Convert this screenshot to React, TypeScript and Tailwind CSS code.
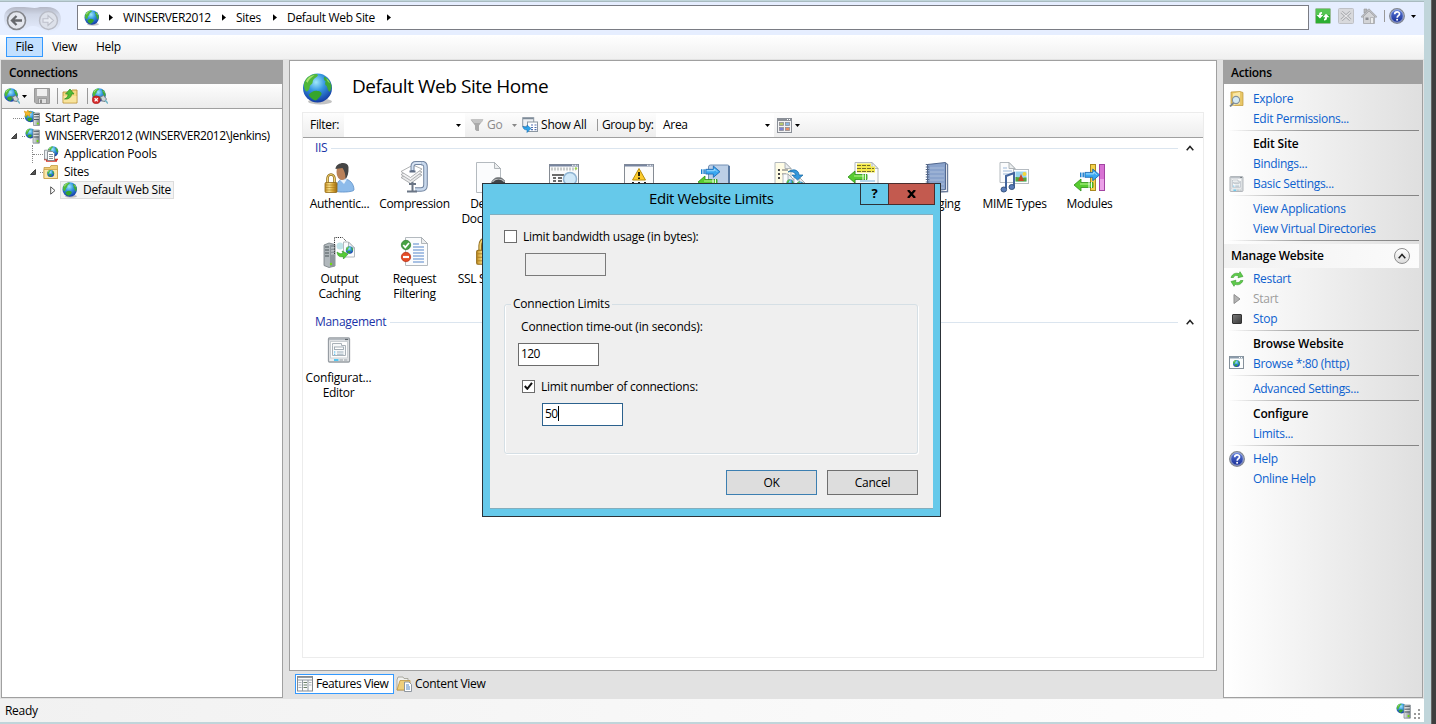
import React, { useId } from "react";

type IconProps = { className?: string };

/* ---------- shared drawing parts ---------- */

function GlobeShape({ cx, cy, r }: { cx: number; cy: number; r: number }) {
  const id = useId();
  return (
    <g>
      <defs>
        <radialGradient id={id} cx="0.45" cy="0.3" r="0.75">
          <stop offset="0" stopColor="#9fe8fa" />
          <stop offset="0.4" stopColor="#3797e2" />
          <stop offset="1" stopColor="#0f2f9c" />
        </radialGradient>
      </defs>
      <circle cx={cx} cy={cy} r={r} fill={`url(#${id})`} />
      <g transform={`translate(${cx - r} ${cy - r}) scale(${r / 15})`}>
        <path d="M1 11C2 5 7 1 13 .5c3 0 3 2 1 3-2 1-4 3-4 5 0 3-3 3-3 5 0 3-2 5-3 5-2 0-3-4-3-7.500z" fill="#4fb83a" />
        <path d="M3 8c2-4 5-6 9-6.500-2 2-6 4-7 8z" fill="#a8e070" />
        <path d="M22 3c4 2 7 6 7.500 10 0 3-1 5-2 6-2-1-2-4-3-6-2-1-2-3-1-5-2-1-2.500-3-1.500-5z" fill="#3fa83a" />
        <path d="M24 5c2 1 3 3 4 5-2-.5-3-2-4-5z" fill="#8fd860" />
        <path d="M6 22c2-3 6-5 9-4 3 0 5 2 4 4-2 3-4 5-6 6-3-1-6-3-7-6z" fill="#36a52c" />
      </g>
    </g>
  );
}

function ServerShape({ x, y, s = 1 }: { x: number; y: number; s?: number }) {
  const id = useId();
  return (
    <g transform={`translate(${x} ${y}) scale(${s})`}>
      <defs>
        <linearGradient id={id}>
          <stop offset="0" stopColor="#e4e8ea" />
          <stop offset="1" stopColor="#7d868c" />
        </linearGradient>
      </defs>
      <path d="M.5 1.500h6v12.500h-6z" fill={`url(#${id})`} stroke="#79838a" strokeWidth=".7" />
      <path d="M1 3h5M1 5.500h5M1 8h5" stroke="#4f5a61" strokeWidth="1" />
      <path d="M1 4h5M1 6.500h5" stroke="#fff" strokeWidth=".6" />
      <circle cx="4.800" cy="12" r="1" fill="#6fe000" />
    </g>
  );
}

function PadlockShape({ x, y, s = 1 }: { x: number; y: number; s?: number }) {
  const id = useId();
  return (
    <g transform={`translate(${x} ${y}) scale(${s})`}>
      <defs>
        <linearGradient id={id}>
          <stop offset="0" stopColor="#c79022" />
          <stop offset=".35" stopColor="#f8e08a" />
          <stop offset=".6" stopColor="#e0b040" />
          <stop offset="1" stopColor="#9b6a10" />
        </linearGradient>
      </defs>
      <path d="M3 10V6a3.500 4.500 0 0 1 7 0v4" fill="none" stroke="#8e6a1a" strokeWidth="2.600" />
      <path d="M3 10V6a3.500 4.500 0 0 1 7 0v4" fill="none" stroke="#f0d070" strokeWidth="1.200" />
      <rect x=".5" y="9.500" width="12" height="10" rx="1" fill={`url(#${id})`} stroke="#936b18" strokeWidth=".8" />
      <path d="M1 12h11M1 14.500h11M1 17h11" stroke="#a97a1c" strokeWidth=".6" />
    </g>
  );
}

function Page({ x, y, w, h, fill = "#fbfcfd" }: { x: number; y: number; w: number; h: number; fill?: string }) {
  return (
    <g>
      <path d={`M${x} ${y}h${w - 6}l6 6v${h - 6}h${-w}z`} fill={fill} stroke="#b4babf" strokeWidth="1" />
      <path d={`M${x + w - 6} ${y}v6h6z`} fill="#eceeef" stroke="#9fa6ab" strokeWidth=".8" />
    </g>
  );
}

const GREEN_LEFT = "M0 6l7-6v3.500h12v5H7V12z";
const BLUE_RIGHT = "M20 6l-7-6v3.500H5v5h8V12z";

function BlueArrow({ x, y, s = 1 }: { x: number; y: number; s?: number }) {
  return (
    <g transform={`translate(${x} ${y}) scale(${s})`}>
      <path d="M0 3.500h1.500v5H0zM2.500 3.500H4v5H2.500z" fill="#1b7fd0" />
      <path d={BLUE_RIGHT} fill="#39a7f0" stroke="#125fae" strokeWidth=".8" />
      <path d="M6 5h8V3l3 3" fill="none" stroke="#a8e0ff" strokeWidth="1" />
    </g>
  );
}

function GreenArrow({ x, y, s = 1 }: { x: number; y: number; s?: number }) {
  return (
    <g transform={`translate(${x} ${y}) scale(${s})`}>
      <path d={GREEN_LEFT} fill="#58cc30" stroke="#2c8f18" strokeWidth=".8" />
      <path d="M6 5h10" stroke="#b6f490" strokeWidth="1" />
      <path d="M15 3v6M17.500 3v6" stroke="#fff" strokeWidth=".9" />
    </g>
  );
}

/* ---------- small icons ---------- */

function Globe({ className = "size-4" }: IconProps) {
  return (
    <svg viewBox="0 0 32 32" className={`shrink-0 ${className}`}>
      <ellipse cx="18" cy="28.500" rx="12" ry="3" fill="#777" opacity=".45" />
      <GlobeShape cx={15.500} cy={15} r={14.500} />
    </svg>
  );
}

function NavButtons() {
  const id = useId();
  return (
    <svg viewBox="0 0 58 28" className="h-7 w-[58px] shrink-0">
      <defs>
        <linearGradient id={id} x2="0" y2="1">
          <stop offset="0" stopColor="#b4b8c6" />
          <stop offset=".3" stopColor="#cfd6e6" />
          <stop offset="1" stopColor="#e6eeff" />
        </linearGradient>
      </defs>
      <path d="M0 13C0 6 5 2 12 2h8c6 0 10 2 16 0h7c9 0 14 5 14 12s-5 13-11 13c-8 0-9-6-17-6s-7 6-15 6S0 21 0 13z" fill={`url(#${id})`} />
      <circle cx="12.500" cy="15.500" r="9" fill="#e4e7ee" stroke="#85878c" strokeWidth="1.600" />
      <path d="M18 15.500H8.500M12.500 11L8 15.500l4.500 4.500" fill="none" stroke="#66686c" strokeWidth="2.300" />
      <circle cx="44.500" cy="15.500" r="9" fill="#dde1ea" stroke="#b9bcc6" strokeWidth="1.400" />
      <path d="M39 13.800h5v-3.300l5.500 5-5.500 5v-3.300h-5z" fill="#e9ecf3" stroke="#bdc0ca" strokeWidth="1.100" />
    </svg>
  );
}

function Triangle({ className = "" }: IconProps) {
  return (
    <svg viewBox="0 0 5 8" className={`h-[7px] w-[4px] shrink-0 ${className}`}>
      <path d="M0 0l5 4-5 4z" fill="#000" />
    </svg>
  );
}

function Caret({ className = "text-black" }: IconProps) {
  return (
    <svg viewBox="0 0 5 3" className={`h-[3px] w-[5px] shrink-0 ${className}`}>
      <path d="M0 0h5L2.500 3z" fill="currentColor" />
    </svg>
  );
}

function RefreshIcon() {
  return (
    <svg viewBox="0 0 16 16" className="size-4 shrink-0">
      <rect x=".5" y=".5" width="15" height="15" rx="1" fill="#2cae32" stroke="#9bbf9b" />
      <rect x="1" y="1" width="14" height="6" fill="#65cf60" opacity=".7" />
      <path d="M7 4C4.500 4 4 5 4 7H1.500L5 10.500 8.300 7H6c0-1 .2-1.300 1-1.300zM9 12.500c2.500 0 3-1 3-3.300h2.500L11 5.800 7.800 9.200H10c0 1-.2 1.500-1 1.500z" fill="#fff" />
    </svg>
  );
}

function StopPageIcon() {
  return (
    <svg viewBox="0 0 16 16" className="size-4 shrink-0">
      <rect x=".5" y=".5" width="15" height="15" rx="1" fill="#d8d9dc" stroke="#bfc1c6" />
      <path d="M3.500 4l9 8M12.500 4l-9 8" stroke="#a3a5a9" strokeWidth="3" />
      <path d="M3.500 4l9 8M12.500 4l-9 8" stroke="#e6e6e8" strokeWidth="1.200" />
    </svg>
  );
}

function HomeIcon() {
  return (
    <svg viewBox="0 0 16 16" className="size-4 shrink-0">
      <path d="M3 1h3v4H3z" fill="#b5b7ba" stroke="#999" strokeWidth=".6" />
      <path d="M2.500 8v7.500h11V8L8 2.500z" fill="#d3d4d7" stroke="#a4a6aa" strokeWidth=".8" />
      <path d="M0 8.800L8 .8l8 8-1.200.7L8 3 1.200 9.500z" fill="#bfc0c4" stroke="#97999d" strokeWidth=".6" />
      <path d="M4.500 9.500h3V12h-3z" fill="#8d8f94" />
      <path d="M9.500 9.500h3v6h-3z" fill="#eceded" stroke="#9a9ca0" strokeWidth=".6" />
    </svg>
  );
}

function HelpIcon() {
  const id = useId();
  return (
    <svg viewBox="0 0 16 16" className="size-4 shrink-0">
      <defs>
        <linearGradient id={id} x2="0" y2="1">
          <stop offset="0" stopColor="#5e7fe0" />
          <stop offset="1" stopColor="#12278f" />
        </linearGradient>
      </defs>
      <circle cx="8" cy="8" r="7.300" fill={`url(#${id})`} stroke="#84888f" strokeWidth="1.300" />
      <circle cx="8" cy="8" r="6.300" fill="none" stroke="#c7cfe4" strokeWidth=".7" />
      <path d="M5.700 6.200c0-3.200 4.800-3.100 4.800-.3 0 1.700-2.300 1.800-2.300 3.800" fill="none" stroke="#fff" strokeWidth="1.700" />
      <circle cx="8.100" cy="11.800" r="1" fill="#fff" />
    </svg>
  );
}

function ConnectIcon({ off = false }: { off?: boolean }) {
  return (
    <svg viewBox="0 0 16 16" className="size-4 shrink-0">
      <GlobeShape cx={7} cy={7} r={6.800} />
      <path d="M7 8.500l3 2" stroke="#6c747a" strokeWidth="1.300" />
      <path d="M8.500 9l3-1.500 3 3.500-1.500 2.500-3-.5z" fill="#cfd4d8" stroke="#737b81" strokeWidth=".9" />
      <path d="M13 12l3 3.500" stroke="#6fb4c4" strokeWidth="1.500" />
      {off && (
        <g>
          <circle cx="4.200" cy="11.800" r="4" fill="#d42a2a" stroke="#a01414" strokeWidth=".5" />
          <path d="M2.600 10.200l3.200 3.200M5.800 10.200l-3.200 3.200" stroke="#fff" strokeWidth="1.300" />
        </g>
      )}
    </svg>
  );
}

function SaveIcon() {
  return (
    <svg viewBox="0 0 16 16" className="size-4 shrink-0">
      <path d="M.5.500h15v15H2l-1.500-1.500z" fill="#adadad" stroke="#999" />
      <path d="M3 1h10v7H3z" fill="#eeeeee" />
      <path d="M4.500 10.500h8v5h-8z" fill="#dedede" stroke="#8a8a8a" strokeWidth=".7" />
      <path d="M6 11.500h2v3.500H6z" fill="#8b8b8b" />
    </svg>
  );
}

function FolderUpIcon() {
  return (
    <svg viewBox="0 0 16 16" className="size-4 shrink-0">
      <path d="M1 4h8l1-2h5v13H1z" fill="#f4d982" stroke="#b99033" strokeWidth=".9" />
      <path d="M1.500 8h13v6.500h-13z" fill="#f9e6a4" opacity=".8" />
      <path d="M2.500 11c3-1 3.500-3 3.500-5H3.500L8 1l4 5h-2.500c0 3-2.500 5.500-7 5z" fill="#4fbc36" stroke="#2f8c22" strokeWidth=".7" />
    </svg>
  );
}

function StartPageIcon() {
  return (
    <svg viewBox="0 0 16 16" className="size-4 shrink-0">
      <GlobeShape cx={6.500} cy={6.500} r={5.800} />
      <path d="M0 1l2.500 1L4 0l.8 2.200L8 2 5.500 4 6 6.500 3.500 5 1 6.500 1.500 4z" fill="#f6b92c" stroke="#d98e10" strokeWidth=".5" />
      <ServerShape x={9} y={1.500} />
    </svg>
  );
}

function ServerIcon() {
  return (
    <svg viewBox="0 0 16 16" className="size-4 shrink-0">
      <GlobeShape cx={5.500} cy={5.500} r={5} />
      <ServerShape x={7.500} y={0.500} s={1.050} />
    </svg>
  );
}

function PoolsIcon() {
  return (
    <svg viewBox="0 0 16 16" className="size-4 shrink-0">
      <GlobeShape cx={10} cy={5.500} r={5.300} />
      <path d="M1 13.500h14M3 15h11" stroke="#d3392c" strokeWidth="1.500" />
      <path d="M2 5h5l2 2v7H2z" fill="#e8ecef" stroke="#727b82" strokeWidth=".7" transform="translate(-.5 -.8)" />
      <path d="M4.500 5.500h5l2 2v7h-7z" fill="#fff" stroke="#727b82" strokeWidth=".8" />
      <path d="M6 8.500h4M6 10.500h4M6 12.500h4" stroke="#66737e" strokeWidth=".8" />
    </svg>
  );
}

function SitesIcon() {
  return (
    <svg viewBox="0 0 16 16" className="size-4 shrink-0">
      <path d="M1 3.500h6l1-2h6.500V14.500H1z" fill="#efcd78" stroke="#c49a40" strokeWidth=".8" />
      <path d="M1 5.500h13.500v9H1z" fill="#fae7a9" stroke="#c49a40" strokeWidth=".7" />
      <GlobeShape cx={7.700} cy={9.500} r={3.500} />
    </svg>
  );
}

function FunnelIcon() {
  return (
    <svg viewBox="0 0 14 14" className="size-3.5 shrink-0">
      <path d="M.5 1.500h13L9 7.500V13H6.500L5 11.500v-4z" fill="#a9a9a9" />
      <path d="M1 1h12v2L10 5H4z" fill="#c4c4c4" />
    </svg>
  );
}

function ShowAllIcon() {
  return (
    <svg viewBox="0 0 16 16" className="size-4 shrink-0">
      <rect x=".7" y=".7" width="11" height="9" fill="#eef1f4" stroke="#8d98a3" />
      <path d="M1 1.500h10.500" stroke="#7d8b98" strokeWidth="1.500" />
      <rect x="5.500" y="5" width="10" height="9.500" fill="#fff" stroke="#8c97a2" />
      <path d="M9 8h2M12.500 8h2M9 10.500h2M12.500 10.500h2M9 12.700h2M12.500 12.700h2" stroke="#506eae" strokeWidth="1.200" />
      <path d="M1 9c0 3 1.500 4 4 3.700V15.500l4-4-4-3.500v2C3 10.300 2 10 1 9z" fill="#2ea4ea" stroke="#1470b8" strokeWidth=".6" />
    </svg>
  );
}

function GroupIcon() {
  return (
    <svg viewBox="0 0 15 15" className="size-[15px] shrink-0">
      <rect x=".5" y=".5" width="14" height="14" fill="#f3f3f4" stroke="#8a8f97" />
      <path d="M1 2h13" stroke="#8a8f97" strokeWidth="2" />
      <path d="M10 1.500h1M12 1.500h1" stroke="#fff" />
      <g stroke="#8e8e96" strokeWidth=".8">
        <rect x="2.500" y="4.500" width="4" height="3" fill="#b5c66c" />
        <rect x="8.500" y="4.500" width="4" height="3" fill="#88b6e4" />
        <rect x="2.500" y="9.500" width="4" height="3" fill="#7c82d6" />
        <rect x="8.500" y="9.500" width="4" height="3" fill="#ea8c62" />
      </g>
    </svg>
  );
}

function Chevron() {
  return (
    <svg viewBox="0 0 8 6" className="h-[6px] w-2 shrink-0">
      <path d="M.7 5.200L4 1.500l3.300 3.700" fill="none" stroke="#222" strokeWidth="1.500" />
    </svg>
  );
}

function ExploreIcon() {
  return (
    <svg viewBox="0 0 16 16" className="size-4 shrink-0">
      <path d="M2 1l9-.5 3 1v13H4L2 13z" fill="#e9c767" stroke="#bd9636" strokeWidth=".7" />
      <path d="M4 2.500l7-1.500v12l-7 1.500z" fill="#f9e7a6" />
      <circle cx="7" cy="9" r="3.600" fill="#d5ebf5" stroke="#85919b" strokeWidth="1.100" />
      <path d="M4.500 12L1 15.500" stroke="#7a858e" strokeWidth="1.800" />
    </svg>
  );
}

function FormIcon({ className = "size-4" }: IconProps) {
  return (
    <svg viewBox="0 0 24 26" className={`shrink-0 ${className}`}>
      <rect x="1.500" y="1" width="21" height="24" rx="1" fill="#eceeef" stroke="#979da3" strokeWidth="1.300" />
      <path d="M2 2.500h20" stroke="#b4bac0" strokeWidth="1.500" />
      <path d="M18 2.500h3" stroke="#60676d" strokeWidth="1.200" />
      <rect x="3.500" y="4.500" width="17" height="16.500" fill="#fdfdfd" stroke="#c9ced2" />
      <path d="M5.500 8.500v-2h9v2h4v10h-13z" fill="#f6f8f9" stroke="#a9b1b8" />
      <rect x="7.500" y="10" width="9" height="2.500" fill="#fff" stroke="#9ba6af" strokeWidth=".9" />
      <path d="M10 15h6.500M10 17.200h6.500" stroke="#9fb0bd" strokeWidth="1" />
      <path d="M7 14.500h1.300v1H7zM7 16.700h1.300v1H7z" fill="#3eb6f0" />
      <path d="M7 23h4.500" stroke="#22b8f2" strokeWidth="1.500" />
      <path d="M12.500 23h3.500M17 23h3.500" stroke="#b0b7bc" strokeWidth="1.300" />
    </svg>
  );
}

function RestartIcon() {
  return (
    <svg viewBox="0 0 14 16" className="h-4 w-3.5 shrink-0">
      <path d="M1 6.500C2.500 2.500 6 1.500 9 2.700l1-2L13 5.500l-5 1.300.7-1.700C6 4 4 4.500 3.500 6.500z" fill="#5ecb4a" stroke="#359a2c" strokeWidth=".6" />
      <path d="M13 9.500c-1.500 4-5 5-8 3.800l-1 2L1 10.500l5-1.300-.7 1.700c2.700 1.100 4.700.6 5.200-1.400z" fill="#5ecb4a" stroke="#359a2c" strokeWidth=".6" />
    </svg>
  );
}

function StartIcon() {
  return (
    <svg viewBox="0 0 8 10" className="h-2.5 w-2 shrink-0">
      <path d="M1 .5l6 4.500-6 4.500z" fill="#b3b3b3" stroke="#8f8f8f" />
    </svg>
  );
}

function BrowseIcon() {
  return (
    <svg viewBox="0 0 15 13" className="mb-[3px] h-[13px] w-[15px] shrink-0">
      <rect x=".5" y=".5" width="14" height="12" fill="#fcfdfd" stroke="#86919b" />
      <path d="M1 1.500h13" stroke="#8c9cac" strokeWidth="2" />
      <path d="M10 1.500h1M12 1.500h1" stroke="#fff" />
      <GlobeShape cx={7.500} cy={7.500} r={3.500} />
    </svg>
  );
}

function FeaturesIcon() {
  return (
    <svg viewBox="0 0 16 16" className="size-4 shrink-0">
      <rect x=".5" y=".5" width="15" height="14.500" fill="#fafafa" stroke="#848a90" />
      <path d="M1 1.500h14M1 4h14M5.500 4v11M11 4v11" stroke="#929aa1" strokeWidth="1" />
      <path d="M1.500 6.500h3M1.500 9h3M1.500 11.500h3M12 6.500h2.500M12 9h2.500" stroke="#adb3b8" />
      <path d="M6.500 6.500h3.500M6.500 9h3.500M6.500 11.500h3.500" stroke="#6b8069" strokeWidth="1.100" />
    </svg>
  );
}

function ContentIcon() {
  return (
    <svg viewBox="0 0 16 16" className="size-4 shrink-0">
      <path d="M1 4l1-3h5l1 1.500h4V14H1z" fill="#f1f1ee" stroke="#9b9a8f" strokeWidth=".8" />
      <path d="M1 14L4 4.500h10V14z" fill="#efcf7b" stroke="#bf9640" strokeWidth=".8" />
      <path d="M8.500 6h4.500l2.500 2.500v7h-7z" fill="#fff" stroke="#848d97" strokeWidth=".9" />
      <path d="M10 9h3M10 11h4M10 13h4" stroke="#5588c4" />
    </svg>
  );
}

/* ---------- 32px feature icons ---------- */

function Big({ children }: { children: React.ReactNode }) {
  return (
    <svg viewBox="0 0 32 32" className="mr-[2px] size-8 shrink-0">
      {children}
    </svg>
  );
}

function WindowShape() {
  return (
    <g>
      <rect x="1.500" y="3.500" width="29" height="28" fill="#fbfbfb" stroke="#858b93" />
      <path d="M1.500 4.500h29" stroke="#7785a0" strokeWidth="2" />
      <path d="M24 4.300h1.500M26.500 4.300H28M28.700 4.300h1" stroke="#fff" strokeWidth="1" />
    </g>
  );
}

function AuthIcon() {
  return (
    <Big>
      <path d="M13 30c0-8 3-12 8-12 6 0 10 5 10 11 0 2-16 3-18 1z" fill="#8dbbea" stroke="#5d8fc6" strokeWidth=".8" />
      <path d="M17 19l4 4 3-5" fill="#e8f2fb" />
      <ellipse cx="19" cy="11" rx="5.500" ry="8" fill="#b98059" />
      <path d="M12.500 8C13 1 25 0 25.500 6c.3 6-1 10-3 12 0-5-1-8-3-11z" fill="#454545" />
      <PadlockShape x={1.500} y={12} />
    </Big>
  );
}

function CompressionIcon() {
  return (
    <Big>
      <path d="M23 2c3 0 4.500 1 4.500 4v18c0 3-1.500 4.500-4.500 4.500h-6" fill="none" stroke="#7184a0" strokeWidth="4.600" />
      <path d="M23 2c3 0 4.500 1 4.500 4v18c0 3-1.500 4.500-4.500 4.500h-6" fill="none" stroke="#c8d8ec" strokeWidth="2.600" />
      <path d="M3 16.500l9.500 6L24 14l-9-4z" fill="#e9eaeb" stroke="#9a9da0" strokeWidth=".8" />
      <path d="M3 13.500l9.500 6L24 11l-9-4z" fill="#f3f3f4" stroke="#9a9da0" strokeWidth=".8" />
      <path d="M3 10.500l9.500 6L24 8l-9-4z" fill="#fff" stroke="#9a9da0" strokeWidth=".8" />
      <path d="M14.500 10V5.500C14.500 3 16 2 18 2h5.500" fill="none" stroke="#7184a0" strokeWidth="4" />
      <path d="M14.500 9V5.500C14.500 3 16 2 18 2h5.500" fill="none" stroke="#d6e2f2" strokeWidth="2" />
      <path d="M11.500 10.500h6" stroke="#5f6d84" strokeWidth="2" />
      <path d="M14.500 21v9M9 30.500h10M11 23h7" stroke="#6b7686" strokeWidth="2" />
    </Big>
  );
}

function DefaultDocIcon() {
  return (
    <Big>
      <Page x={3.500} y={1.500} w={24} h={30} />
      <circle cx="25.500" cy="24" r="7.500" fill="#404448" stroke="#8b8f92" />
      <path d="M19.500 21c3-4 9-4 12 0" stroke="#b6b9bb" strokeWidth="1.200" fill="none" />
    </Big>
  );
}

function BrowsingIcon() {
  return (
    <Big>
      <WindowShape />
      <path d="M3 8h25" stroke="#c8cbca" strokeWidth="3" strokeDasharray="2 1" />
      <circle cx="28" cy="7.500" r="1.200" fill="#9bd24a" />
      <path d="M4 14h12M5 17h3M10 17h4M5 20h3M10 20h4M5 23h9" stroke="#3d3d3d" strokeWidth="1.400" />
      <circle cx="22" cy="18" r="6.500" fill="#cfe8f8" stroke="#8fb4d2" strokeWidth="1.500" />
    </Big>
  );
}

function ErrorPagesIcon() {
  return (
    <Big>
      <WindowShape />
      <path d="M16 7.500l6.500 11.500h-13z" fill="#fccb2c" stroke="#b88c0c" strokeWidth="1" strokeLinejoin="round" />
      <path d="M16 11v4M16 16.500V18" stroke="#2a2408" strokeWidth="2" />
      <path d="M10 21v6M22 21v6M16 21v6" stroke="#222" strokeWidth="2" />
    </Big>
  );
}

function CgiIcon() {
  return (
    <Big>
      <rect x="10.500" y="4" width="21" height="26" rx="2" fill="#bccfe6" stroke="#7390b4" />
      <path d="M31 5v25" stroke="#5a7aa2" strokeWidth="2" />
      <BlueArrow x={3} y={5} s={0.950} />
      <GreenArrow x={0} y={15} />
    </Big>
  );
}

function HandlerIcon() {
  return (
    <Big>
      <Page x={2} y={1.500} w={16} h={28} fill="#fffce4" />
      <path d="M5 9h2M5 13h2M5 17h2" stroke="#444" strokeWidth="2" />
      <path d="M9 9h6M9 13h4" stroke="#666" />
      <Page x={10} y={13} w={11} h={18} />
      <Page x={21} y={16} w={11} h={15} />
      <path d="M15 11c5-4 11-2 11 3h4l-5.500 5-5.500-5h4c-1-3-5-4-8-3z" fill="#3498dc" stroke="#17659f" strokeWidth=".7" />
      <GlobeShape cx={17} cy={22} r={3.500} />
      <GlobeShape cx={27} cy={24} r={3.500} />
    </Big>
  );
}

function HeadersIcon() {
  return (
    <Big>
      <Page x={7} y={1.500} w={23} h={29} />
      <path d="M9 4h14M9 7h18M9 10h18" stroke="#f3e94c" strokeWidth="3" />
      <path d="M9 4.500h13M9 7.500h17M9 10.500h17" stroke="#645f28" strokeWidth=".9" strokeDasharray="4 1" />
      <path d="M12 20h15M12 24h15" stroke="#79b2dd" strokeWidth="1.200" />
      <GreenArrow x={0} y={10} />
    </Big>
  );
}

function LoggingIcon() {
  return (
    <Big>
      <path d="M4.500 3.500l18-2v27l-18 2z" fill="#8aa3cc" stroke="#52688f" />
      <path d="M22.500 2l2 1.500v27l-18 1" fill="none" stroke="#6c7d9c" strokeWidth="1.400" />
      <path d="M7 7h14M7 11h14M7 15h14M7 19h14M7 23h14M7 27h14" stroke="#b4c5e0" strokeWidth=".8" />
      <path d="M4.500 3v27" stroke="#566887" strokeWidth="3.500" strokeDasharray="1 1.500" />
    </Big>
  );
}

function MimeIcon() {
  return (
    <Big>
      <Page x={2} y={1.500} w={15} h={20} />
      <path d="M5 7h4M5 10h9M5 13h9" stroke="#9bb8d9" />
      <rect x="15.500" y="8.500" width="15" height="14" fill="#fff" stroke="#b5bbc1" />
      <path d="M17.500 10.500h11v10h-11z" fill="#98d3f0" />
      <path d="M17.500 20.500V16c4 0 5 1 11 .5v4z" fill="#55a538" />
      <path d="M20 20l3-7 3 7z" fill="#c74727" />
      <circle cx="26.500" cy="13" r="2" fill="#f4d73c" />
      <path d="M8 28V15l8-3v13" fill="none" stroke="#42659d" strokeWidth="2" />
      <ellipse cx="5.800" cy="28.500" rx="2.800" ry="2.500" fill="#5b7db9" stroke="#36547f" />
      <ellipse cx="13.800" cy="26" rx="2.800" ry="2.500" fill="#5b7db9" stroke="#36547f" />
    </Big>
  );
}

function ModulesIcon() {
  return (
    <Big>
      <rect x="17.500" y="3.500" width="5" height="26" fill="#f4d34c" stroke="#a98920" />
      <rect x="26.500" y="3.500" width="5" height="26" fill="#eba0e8" stroke="#a244a2" />
      <path d="M27 4h4v14h-4z" fill="#cb54c6" opacity=".6" />
      <BlueArrow x={7} y={8} s={0.980} />
      <GreenArrow x={1} y={18} />
    </Big>
  );
}

function OutputCachingIcon() {
  return (
    <Big>
      <path d="M1 9l5-2 6 1.500V30l-6 1.500L1 29.500z" fill="#b1b8bc" stroke="#737c82" strokeWidth=".8" />
      <path d="M7 9l5-.5V30l-5 1z" fill="#8d969b" />
      <path d="M2 11h4M2 14h4M2 17h4M2 20h4" stroke="#4d565b" />
      <path d="M8 12l4-.3M8 15l4-.3M8 18l4-.3" stroke="#d5d9dc" />
      <circle cx="8" cy="28" r="1.200" fill="#71dc10" />
      <path d="M11.500 18V1.500h8l4 4V8" fill="none" stroke="#333" strokeDasharray="1.200 1" />
      <circle cx="17" cy="10" r="3.500" fill="#bfe2e8" />
      <Page x={20.500} y={6} w={11} h={15} />
      <GlobeShape cx={26.500} cy={14} r={3.700} />
      <path d="M14 16c3 2 4 2 6 1l-1-2 6 3-4.500 5-.5-2.500c-4 1-5.500-1-6-4.500z" fill="#55cc34" stroke="#2e9420" strokeWidth=".6" />
    </Big>
  );
}

function FilteringIcon() {
  return (
    <Big>
      <Page x={7.500} y={1.500} w={22} h={28} />
      <path d="M15 8h6M15 11h11M15 14h11M15 17h11M15 20h11M15 23h11M15 26h11" stroke="#5685cb" strokeWidth="1.100" />
      <circle cx="8" cy="9" r="4.700" fill="#47a243" stroke="#2c7b2c" strokeWidth=".7" />
      <path d="M5.300 9l2 2.300L11 7" stroke="#fff" strokeWidth="1.800" fill="none" />
      <circle cx="8" cy="21" r="4.700" fill="#e44a24" stroke="#b22c12" strokeWidth=".7" />
      <path d="M5 21h6" stroke="#fff" strokeWidth="2.200" />
    </Big>
  );
}

function SslIcon() {
  return (
    <Big>
      <PadlockShape x={3} y={1} s={1.400} />
    </Big>
  );
}

/* ---------- page pieces ---------- */

type Feature = { icon: React.ReactNode; lines: string[] };

const FEATURES: Feature[] = [
  { icon: <AuthIcon />, lines: ["Authentic..."] },
  { icon: <CompressionIcon />, lines: ["Compression"] },
  { icon: <DefaultDocIcon />, lines: ["Default", "Document"] },
  { icon: <BrowsingIcon />, lines: [] },
  { icon: <ErrorPagesIcon />, lines: [] },
  { icon: <CgiIcon />, lines: [] },
  { icon: <HandlerIcon />, lines: [] },
  { icon: <HeadersIcon />, lines: [] },
  { icon: <LoggingIcon />, lines: ["Logging"] },
  { icon: <MimeIcon />, lines: ["MIME Types"] },
  { icon: <ModulesIcon />, lines: ["Modules"] },
  { icon: <OutputCachingIcon />, lines: ["Output", "Caching"] },
  { icon: <FilteringIcon />, lines: ["Request", "Filtering"] },
  { icon: <SslIcon />, lines: ["SSL Settings"] },
];

function FeatureCell({ icon, lines }: Feature) {
  return (
    <div className="flex h-[75px] w-[75px] flex-col items-center pt-1">
      {icon}
      <div className="mt-[3px] flex flex-col items-center">
        {lines.map((line) => (
          <span key={line} className="h-[15px] leading-[15px] whitespace-nowrap">
            {line}
          </span>
        ))}
      </div>
    </div>
  );
}

function GroupHeader({ title }: { title: string }) {
  return (
    <div className="flex h-[18px] items-center pr-[9px] pl-[12px]">
      <span className="text-[#1a33a8]">{title}</span>
      <div className="ml-1 h-px grow bg-[#dbe5ef]" />
      <div className="w-2" />
      <Chevron />
    </div>
  );
}

function Action({
  label,
  icon,
  kind = "link",
}: {
  label: string;
  icon?: React.ReactNode;
  kind?: "link" | "title" | "off";
}) {
  const tone =
    kind === "title"
      ? "font-semibold text-black tracking-[-0.16px]"
      : kind === "off"
        ? "text-[#9d9d9d]"
        : "text-[#0c61cf]";
  return (
    <div className="flex h-5 items-center">
      <div className="flex w-[29px] justify-center pr-[4px]">{icon}</div>
      <span className={tone}>{label}</span>
    </div>
  );
}

function Rule() {
  return (
    <div className="flex h-[5px] pt-px pr-[3px] pl-1">
      <div className="h-px grow bg-linear-to-r from-transparent via-[#999] via-40% to-[#848484]" />
    </div>
  );
}

function Separator({ className = "" }: IconProps) {
  return <div className={`w-px shrink-0 bg-[#999] ${className}`} />;
}

function Expander({ open }: { open: boolean }) {
  return open ? (
    <svg viewBox="0 0 6 6" className="size-1.5 shrink-0">
      <path d="M5.500.500v5h-5z" fill="#555" stroke="#222" strokeWidth=".8" />
    </svg>
  ) : (
    <svg viewBox="0 0 6 9" className="h-[9px] w-1.5 shrink-0">
      <path d="M.7.800l4.300 3.700L.7 8.200z" fill="#fff" stroke="#555" />
    </svg>
  );
}

function Dots({ className }: IconProps) {
  return <div className={`border-t border-dotted border-[#888] ${className}`} />;
}

function Connections() {
  return (
    <section className="ml-px flex h-[638px] w-[282px] shrink-0 flex-col border border-[#a0a0a0] bg-white">
      <h2 className="flex h-[23px] shrink-0 items-center bg-[#a0a0a0] pl-[7px] font-semibold">Connections</h2>
      <div className="flex h-[25px] shrink-0 items-center border-b border-[#a0a0a0] bg-linear-to-b from-[#fdfdfd] to-[#ececec] pl-[2px]">
        <ConnectIcon />
        <Caret className="ml-[2px] text-black" />
        <div className="w-[7px]" />
        <SaveIcon />
        <Separator className="mx-[7px] h-4" />
        <div className="-ml-[3px]" />
        <FolderUpIcon />
        <Separator className="mr-[4px] ml-[9px] h-4" />
        <ConnectIcon off />
      </div>
      <div className="flex flex-col">
        <div className="flex h-[18px] items-center">
          <Dots className="ml-[11px] w-[11px]" />
          <StartPageIcon />
          <span className="ml-[5px]">Start Page</span>
        </div>
        <div className="flex h-[18px] items-center">
          <div className="ml-[9px]" />
          <Expander open />
          <Dots className="ml-[5px] w-[3px]" />
          <ServerIcon />
          <span className="ml-[4px] tracking-[-0.41px]">WINSERVER2012 (WINSERVER2012\Jenkins)</span>
        </div>
        <div className="flex h-[18px] items-center">
          <div className="ml-[30px] h-full border-l border-dotted border-[#888]" />
          <Dots className="w-[10px]" />
          <PoolsIcon />
          <span className="ml-[5px] tracking-[-0.2px]">Application Pools</span>
        </div>
        <div className="flex h-[18px] items-center">
          <div className="ml-[28px]" />
          <Expander open />
          <Dots className="ml-[4px] w-[3px]" />
          <SitesIcon />
          <span className="ml-[5px]">Sites</span>
        </div>
        <div className="flex h-[18px] items-center">
          <div className="ml-[48px]" />
          <Expander open={false} />
          <div className="ml-1 flex h-[18px] w-[114px] items-center border border-[#dcdcdc] bg-[#f3f3f3] pl-px">
            <Globe />
            <span className="ml-[5px]">Default Web Site</span>
          </div>
        </div>
      </div>
    </section>
  );
}

function FilterBar() {
  return (
    <div className="flex h-[25px] items-center border-b border-[#a0a0a0] bg-linear-to-b from-[#fdfdfd] to-[#eeeeee] pl-[7px]">
      <div className="w-[34px] whitespace-nowrap">Filter:</div>
      <div className="flex h-6 w-[121px] items-center justify-end bg-white pr-1">
        <Caret />
      </div>
      <div className="ml-[5px] flex w-[52px] items-center text-[#8b8b8b]">
        <FunnelIcon />
        <span className="ml-[3px] w-[25px]">Go</span>
        <Caret className="text-[#888]" />
      </div>
      <ShowAllIcon />
      <span className="ml-[3px] w-[56px] tracking-[-0.2px] whitespace-nowrap">Show All</span>
      <Separator className="h-3" />
      <span className="ml-1 w-[54px] tracking-[-0.4px] whitespace-nowrap">Group by:</span>
      <div className="flex h-6 w-[118px] items-center justify-between bg-white pr-1 pl-[7px]">
        <span>Area</span>
        <Caret />
      </div>
      <div className="w-[3px]" />
      <GroupIcon />
      <Caret className="ml-[3px] text-black" />
    </div>
  );
}

function Center() {
  return (
    <div className="ml-[6px] flex w-[928px] shrink-0 flex-col">
      <section className="flex h-[611px] flex-col border border-[#a0a0a0] bg-white px-[12px]">
        <div className="flex h-[51px] shrink-0 items-center">
          <Globe className="mt-[4px] size-8" />
          <h1 className="ml-[18px] text-[19px] tracking-[-0.45px]">Default Web Site Home</h1>
        </div>
        <div className="h-[546px] w-[902px] border border-[#ececec]">
          <FilterBar />
          <div className="h-px" />
          <GroupHeader title="IIS" />
          <div className="-ml-px grid w-[825px] grid-cols-[repeat(11,75px)]">
            {FEATURES.map((feature, i) => (
              <FeatureCell key={i} {...feature} />
            ))}
          </div>
          <div className="h-[6px]" />
          <GroupHeader title="Management" />
          <div className="-ml-[2px] flex w-[75px] flex-col items-center pt-[6px]">
            <FormIcon className="h-[26px] w-6" />
            <span className="mt-[7px] h-[15px] leading-[15px] tracking-[-0.2px]">Configurat...</span>
            <span className="h-[15px] leading-[15px]">Editor</span>
          </div>
        </div>
      </section>
      <div className="flex h-[26px] items-center pl-[6px]">
        <div className="flex h-5 w-[99px] items-center border border-[#3399ff] bg-white pl-px">
          <FeaturesIcon />
          <span className="ml-[3px] tracking-[-0.42px] whitespace-nowrap">Features View</span>
        </div>
        <div className="ml-[2px] flex items-center">
          <ContentIcon />
          <span className="ml-[3px] whitespace-nowrap">Content View</span>
        </div>
      </div>
    </div>
  );
}

function Actions() {
  return (
    <section className="ml-[6px] flex h-[638px] w-[200px] shrink-0 flex-col border border-[#a0a0a0] bg-linear-to-r from-white to-[#dfdfdf]">
      <h2 className="flex h-[23px] shrink-0 items-center bg-[#a0a0a0] pl-[7px] font-semibold">Actions</h2>
      <div className="h-[5px]" />
      <Action label="Explore" icon={<ExploreIcon />} />
      <Action label="Edit Permissions..." />
      <Rule />
      <Action label="Edit Site" kind="title" />
      <Action label="Bindings..." />
      <Action label="Basic Settings..." icon={<FormIcon className="h-4 w-[15px]" />} />
      <Rule />
      <Action label="View Applications" />
      <Action label="View Virtual Directories" />
      <Rule />
      <div className="mr-[3px] mb-px flex h-6 items-center justify-between bg-linear-to-r from-[#f2f2f2] to-[#fbfbfb] pr-[9px] pl-[7px]">
        <span className="font-semibold tracking-[-0.22px]">Manage Website</span>
        <div className="mb-px flex size-4 items-center justify-center rounded-full border border-[#8d8d8d] bg-linear-to-b from-white to-[#dcdcdc]">
          <Chevron />
        </div>
      </div>
      <Action label="Restart" icon={<RestartIcon />} />
      <Action label="Start" kind="off" icon={<StartIcon />} />
      <Action
        label="Stop"
        icon={<div className="size-2.5 rounded-[1px] border border-[#333] bg-linear-to-br from-[#777] to-[#3d3d3d]" />}
      />
      <Rule />
      <Action label="Browse Website" kind="title" />
      <Action label="Browse *:80 (http)" icon={<BrowseIcon />} />
      <Rule />
      <Action label="Advanced Settings..." />
      <Rule />
      <Action label="Configure" kind="title" />
      <Action label="Limits..." />
      <Rule />
      <Action label="Help" icon={<HelpIcon />} />
      <Action label="Online Help" />
    </section>
  );
}

function AddressBar() {
  return (
    <div className="flex h-[33px] items-center bg-[#e6eeff]">
      <div className="w-[4px]" />
      <NavButtons />
      <div className="mb-[2px] ml-[15px] flex h-[25px] w-[1232px] items-center border border-[#7a7c84] bg-white pl-[6px]">
        <Globe />
        <Triangle className="ml-[9px]" />
        <span className="ml-[10px] w-[99px] tracking-[-0.38px]">WINSERVER2012</span>
        <Triangle />
        <span className="ml-[10px] w-[37px]">Sites</span>
        <Triangle />
        <span className="ml-[10px] w-[100px] whitespace-nowrap">Default Web Site</span>
        <Triangle />
      </div>
      <div className="mb-[5px] ml-[6px] flex items-center">
        <RefreshIcon />
        <div className="w-[7px]" />
        <StopPageIcon />
        <div className="w-[7px]" />
        <HomeIcon />
        <Separator className="mr-1 ml-[7px] h-3" />
        <HelpIcon />
        <Caret className="ml-[6px] text-black" />
      </div>
    </div>
  );
}

function Field({ value, className, caret = false }: { value?: string; className: string; caret?: boolean }) {
  return (
    <div className={`flex h-[23px] w-[81px] items-center border pb-[2px] pl-[2px] ${className}`}>
      <span className="tracking-[-0.6px]">{value}</span>
      {caret && <div className="h-[15px] w-px bg-black" />}
    </div>
  );
}

function Dialog() {
  return (
    <div className="absolute top-[183px] left-[482px] flex h-[334px] w-[459px] flex-col border border-[#2c3238] bg-[#66c9ea] px-[7px] pb-[7px]">
      <div className="flex h-[30px] shrink-0">
        <div className="w-[370px] pt-[2px] pl-[159px] text-[15px] leading-[24px] tracking-[-0.42px] whitespace-nowrap">
          Edit Website Limits
        </div>
        <div className="-mt-px flex h-[22px] w-[29px] items-center justify-center border border-[#2c3238] text-[13px] font-bold">
          ?
        </div>
        <div className="-mt-px -mr-[2px] -ml-px flex h-[22px] w-[47px] items-center justify-center border border-[#4a2d2d] bg-[#c35a4f]">
          <svg viewBox="0 0 9 8" className="h-2 w-[9px]">
            <path d="M1 0l7 8M8 0L1 8" stroke="#000" strokeWidth="2.300" />
          </svg>
        </div>
      </div>
      <div className="flex grow flex-col border-y border-[#82aebe] bg-[#efefef] pl-[14px]">
        <div className="mt-[13px] flex h-[18px] items-center">
          <div className="mb-[2px] size-[13px] border border-[#6c6c6c] bg-white" />
          <span className="ml-[6px] tracking-[-0.26px]">Limit bandwidth usage (in bytes):</span>
        </div>
        <Field className="mt-[7px] ml-[21px] border-[#7a7a7a] bg-[#efefef]" />
        <fieldset className="mt-[19px] flex h-[159px] w-[414px] flex-col rounded-[3px] border border-[#d5dfe5] pl-[13px] shadow-[inset_1px_0_0_#fff,1px_1px_0_#fff]">
          <legend className="-ml-[7px] h-[18px] px-[2px] leading-[18px] tracking-[-0.22px]">Connection Limits</legend>
          <div className="mt-[5px] ml-[3px] h-[18px] leading-[18px] tracking-[-0.18px]">
            Connection time-out (in seconds):
          </div>
          <Field value="120" className="mt-[7px] border-[#6c6c6c] bg-white" />
          <div className="mt-3 ml-1 flex h-[18px] items-center">
            <div className="mb-[2px] flex size-[13px] items-center justify-center border border-[#6c6c6c] bg-white">
              <svg viewBox="0 0 9 8" className="h-2 w-[9px]">
                <path d="M.8 4l2.500 2.800L8 .8" fill="none" stroke="#111" strokeWidth="2" />
              </svg>
            </div>
            <span className="ml-[6px] tracking-[-0.26px]">Limit number of connections:</span>
          </div>
          <Field value="50" caret className="mt-[7px] ml-6 border-[#2b618d] bg-white" />
        </fieldset>
        <div className="mt-[16px] flex gap-[10px] pl-[222px]">
          <button className="h-[25px] w-[91px] border border-[#3c7fb1] bg-[#dddddd]">OK</button>
          <button className="h-[25px] w-[91px] border border-[#6f6f6f] bg-[#dddddd]">Cancel</button>
        </div>
      </div>
    </div>
  );
}

export default function App() {
  return (
    <div className="relative flex h-[724px] w-[1436px] overflow-hidden bg-[#c0d5da] font-['Open_Sans','Noto_Sans',sans-serif] text-[12px] tracking-[-0.3px] text-black">
      <main className="flex w-[1424px] shrink-0 flex-col">
        <div className="h-[2px] shrink-0 border-b border-[#a9bbc0] bg-[#c0d5da]" />
        <AddressBar />
        <nav className="flex h-[24px] items-center bg-linear-to-b from-white to-[#f0f0f0] pl-[6px]">
          <div className="flex h-5 w-[37px] items-center justify-center border border-[#3399ff] bg-[#c2e0ff]">File</div>
          <span className="ml-[9px] w-[44px]">View</span>
          <span>Help</span>
        </nav>
        <div className="flex h-[640px] shrink-0 bg-[#e2e2e2] pt-px">
          <Connections />
          <Center />
          <Actions />
        </div>
        <footer className="flex h-[23px] shrink-0 items-center justify-between bg-linear-to-r from-[#f1f1f1] to-white pr-[3px] pl-[5px]">
          <span>Ready</span>
          <div className="flex items-end">
            <ServerIcon />
            <svg viewBox="0 0 8 10" className="ml-px h-2.5 w-2">
              <path d="M5 0h2v2H5zM1 4h2v2H1zM5 4h2v2H5zM1 8h2v2H1zM5 8h2v2H5z" fill="#999" />
            </svg>
          </div>
        </footer>
      </main>
      <div className="ml-[7px] w-[5px] shrink-0 border-l border-[#666] bg-[#3e3e3e]" />
      <Dialog />
    </div>
  );
}
